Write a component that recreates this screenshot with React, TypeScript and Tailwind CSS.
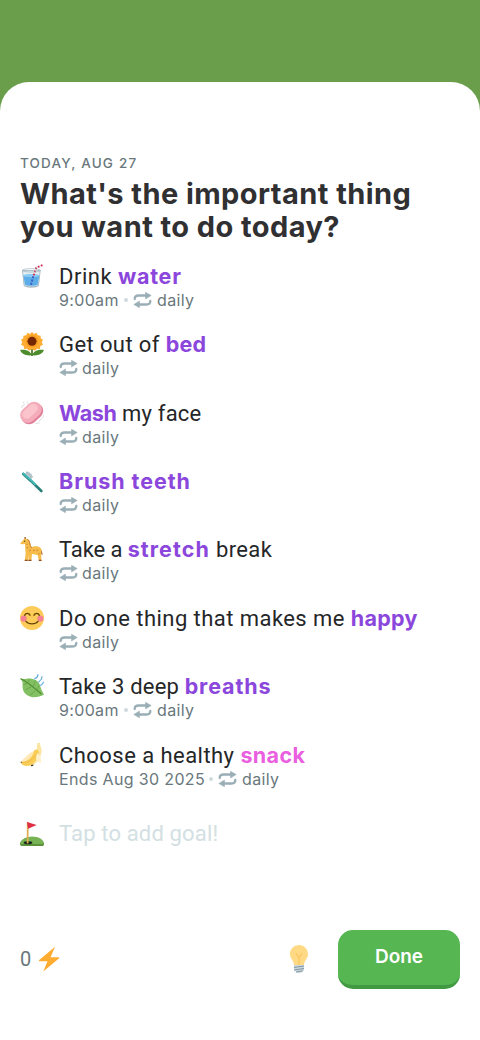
import type {ReactNode} from 'react'

type Segment = {
    text: string
    className: string
}

type Goal = {
    icon: ReactNode
    title: Segment[]
    time?: Segment
}

const PURPLE = 'font-[Inter,sans-serif] text-[21.5px] font-bold text-[#8b46dc]'

function Cup() {
    return (
        <svg viewBox="0 0 36 36" className="size-full">
            <path d="M3 9h28l-2.500 23c-.4 2-5 3.500-11.500 3.500S6 34 5.500 32z" fill="#a3b5be"/>
            <path d="M4.300 10h25.400l-2.400 21c-.5 1.600-4.300 2.500-10.300 2.500s-9.800-.9-10.300-2.500z" fill="#e1edf2"/>
            <path d="M5 17c5-1.500 19-1.500 24 0l-2.200 13.500c-.5 1.500-4.300 2.300-9.800 2.300s-9.300-.8-9.800-2.300z" fill="#5dade8"/>
            <ellipse cx="17" cy="17.500" rx="12" ry="2.500" fill="#88caf4"/>
            <path d="M16.500 31L20 18" stroke="#3f5fc4" strokeWidth="3" strokeDasharray="3 2"/>
            <path d="M20.500 17L24.500 5.500 34 1.500" fill="none" stroke="#f3e9ef" strokeWidth="2.800"/>
            <path d="M20.500 17L24.500 5.500 34 1.500" fill="none" stroke="#cf244c" strokeWidth="2.800" strokeDasharray="2.500 2.400"/>
            <ellipse cx="17" cy="9.500" rx="13.500" ry="2.500" fill="none" stroke="#9cb0b9"/>
        </svg>
    )
}

function Sunflower() {
    return (
        <svg viewBox="0 0 36 36" className="size-full">
            <path d="M18 22v14" stroke="#3e721d" strokeWidth="2.500"/>
            <path d="M18 35C15 27 7 26 0 27c2 5 7 9 18 8zM18 35c3-8 11-9 18-8-2 5-7 9-18 8z" fill="#4c8b2b"/>
            <path
                d="M18 0l3 3 4-2 1.500 4 4.500.5v4l3.500 2-2 4 2 3.500-4 2-.5 4.500-4.500-.5-3 3-4.500-2-4.500 2-3-3-4.500.5-.5-4.500-4-2 2-3.500-2-4 3.500-2v-4l4.500-.5L11 1l4 2z"
                fill="#ffac33"/>
            <circle cx="18" cy="14" r="9" fill="#f4900c" opacity=".6"/>
            <circle cx="18" cy="14" r="6.800" fill="#732700"/>
        </svg>
    )
}

function Soap() {
    return (
        <svg viewBox="0 0 36 36" className="size-full">
            <g fill="none" stroke="#d7dcde" strokeWidth="1.500" strokeLinecap="round">
                <path d="M6 1c-4 2 3 3 0 5s-4 1-3 4M11 0c-3 2 3 3 1 5M29 30c3-1 0-3 3-3M33 25c3-1 1-3 3-4M24 34c3 0 2-2 5-1"/>
            </g>
            <g transform="rotate(-43 17.500 18)">
                <rect x="-.5" y="8" width="36" height="23" rx="11.500" fill="#e07f97"/>
                <rect x="-.5" y="5" width="36" height="23" rx="11.500" fill="#f4abba"/>
                <rect x="4" y="8" width="27" height="13" rx="6.500" fill="#fbc4cd"/>
            </g>
        </svg>
    )
}

function Toothbrush() {
    return (
        <svg viewBox="0 0 36 36" className="size-full">
            <path d="M8 7l2-4 2 2 2-1 1 3 3 0-1 3 3 1-3 4z" fill="#b9c8ce"/>
            <path d="M10 7l1.500-3M13 9l2-2.500M15 12l2.500-2.500" stroke="#8ca2ab"/>
            <path d="M5 7.500l11 10L32 33" fill="none" stroke="#277f79" strokeWidth="4" strokeLinecap="round"/>
            <path d="M5 6.800l11.500 10 6 6" fill="none" stroke="#44b9b5" strokeWidth="3" strokeLinecap="round"/>
        </svg>
    )
}

function Giraffe() {
    return (
        <svg viewBox="0 0 36 36" className="size-full">
            <path d="M30 19c3 1 1.500 5 3.500 7.500" fill="none" stroke="#b86b35" strokeWidth="1.800"/>
            <path
                d="M6 3l1.500-3 1.500 2.500C13 3 15 5 15 9l2 6c5-1.500 11-1.500 14 1.500 1.800 2 1.200 5 .5 8l.8 11.500h-4l-1.800-9-8.500-1.500L17 36h-4.500l.5-10-1.500 10H7L8.500 24c-.8-3-.5-9-1-13.500L3 11C0 11 0 8 2.500 7z"
                fill="#f6bd4b"/>
            <path d="M11 3.500c3 1 3.500 5 4.300 9l2 4" fill="none" stroke="#c27035" strokeWidth="1.400"/>
            <g fill="#d58a3f">
                <circle cx="10.500" cy="11" r="1.100"/>
                <circle cx="11" cy="16" r="1.200"/>
                <circle cx="15" cy="20" r="1.300"/>
                <circle cx="21" cy="20" r="1.300"/>
                <circle cx="26" cy="20" r="1.300"/>
                <circle cx="28.500" cy="25" r="1.100"/>
            </g>
            <path d="M7.300 34h4.400l-.3 2H7zM12.700 34h4.700L17 36h-4.500zM28 34h4.200l.1 2h-3.900zM6.800 0h1.800v2.500H6.800z" fill="#8c4f2b"/>
            <circle cx="7" cy="6.300" r=".9" fill="#292f33"/>
        </svg>
    )
}

function Smile() {
    return (
        <svg viewBox="0 0 36 36" className="size-full">
            <circle cx="18" cy="18" r="18" fill="#fdcb58"/>
            <circle cx="5.500" cy="19" r="4.600" fill="#f58294"/>
            <circle cx="30.500" cy="19" r="4.600" fill="#f58294"/>
            <g fill="none" stroke="#664500" strokeWidth="2" strokeLinecap="round">
                <path d="M7 14c1.500-4 6.500-4 8 0M21 14c1.500-4 6.500-4 8 0M9 23c4 5 14 5 18 0"/>
            </g>
        </svg>
    )
}

function Leaf() {
    return (
        <svg viewBox="0 0 36 36" className="size-full">
            <path d="M0 6c4 2 5 2 10 1 10-1 18 3 20 10 1 5 3 8 6 14-7 3-13 5-20 3C5 31 3 23 4 14 4 11 2 9 0 6z" fill="#83bf63"/>
            <path d="M1 7c10 4 23 16 31 23" fill="none" stroke="#4c8b33" strokeWidth="1.600"/>
            <path d="M12 13l2-5M20 19l3-9M25 24l4-7M11 14L5 16M17 19L8 24M23 25l-8 7" fill="none" stroke="#63a344"
                  strokeWidth="1.200"/>
            <path d="M27 1c0 4-3 5-5 6M33 4c0 5-3 6-5 8M35 12c0 3-2 4-4 5" fill="none" stroke="#5ba9df" strokeWidth="1.700"
                  strokeLinecap="round"/>
        </svg>
    )
}

function Banana() {
    return (
        <svg viewBox="0 0 36 36" className="size-full">
            <path d="M23 14c3-3 2-9 3-14h4c0 6 4 9 2 15-2 10-8 17-17 20l-3-2z" fill="#fbe5a1"/>
            <path d="M21 12c3-4 8-2 7 4-2 10-9 17-16 18-5 1-9 0-11-5 5 0 12-9 20-17z" fill="#f9cd55"/>
            <path d="M21 12c-7 2-13 10-20 16 8 2 18-6 20-16z" fill="#ffe8b6"/>
            <path d="M25 15c6 2 7 11 7 15-3-1-6-2-8-6z" fill="#fff0c9"/>
            <path d="M3 29c10 1 17-5 22-13" fill="none" stroke="#f2b94a" strokeWidth="1.500"/>
            <circle cx="2" cy="29" r="1.200" fill="#8a7443"/>
            <path d="M16.500 34l3.500-.7" stroke="#3e3b2c" strokeWidth="2"/>
        </svg>
    )
}

function GolfFlag() {
    return (
        <svg viewBox="0 0 36 36" className="size-full">
            <path d="M36 33c0 2.500-1 3-3 3H3c-2 0-3-1-3-3 0-6 9-11 18-11s18 5 18 11z" fill="#5c913b"/>
            <path d="M1 31c3-11 31-12 34-1 1 4-2 3-5 3H5c-2 0-4 0-4-2z" fill="#77b255"/>
            <ellipse cx="12" cy="31" rx="6.500" ry="2.200" fill="#18251b"/>
            <path d="M11.500 1v30" stroke="#ddae55" strokeWidth="2.600" strokeLinecap="round"/>
            <path d="M10.500 0L25 4.500 12 10z" fill="#dd2e44"/>
        </svg>
    )
}

function Bolt() {
    return (
        <svg viewBox="0 0 22 26" className="h-[26px] w-[22px]">
            <path d="M17 .8L1.200 14c-.7.6-.3 1.200.5 1.200h7.800L5.300 25.500 20.900 12.500c.7-.6.300-1.200-.5-1.200h-7.800z" fill="#ffac33"/>
        </svg>
    )
}

function Bulb() {
    return (
        <svg viewBox="0 0 18 28" className="h-[28px] w-[18px]">
            <path d="M9 0C4 0 0 4 0 9c0 4.500 3.500 6 4 11h10c.5-5 4-6.500 4-11 0-5-4-9-9-9z" fill="#ffd983"/>
            <path d="M6 8.500L9 12.500l3-4M9 12.500V20" fill="none" stroke="#f9c562" strokeWidth="1.200" strokeLinecap="round"/>
            <path d="M4 20h10v5l-2.500 2.500c-1 .6-4 .6-5 0L4 25z" fill="#ccd6dd"/>
            <path d="M4 22.500l10-1.500M4 25l10-1.500M6 27l7-1.200" stroke="#8299a5" strokeWidth="1"/>
        </svg>
    )
}

function Repeat() {
    return (
        <svg viewBox="0 0 19 16" className="h-4 w-[19px] shrink-0">
            <g fill="none" stroke="#9aaeb6" strokeWidth="2.300" strokeLinecap="round">
                <path d="M1.700 7C1.700 4.500 3 3.500 5.500 3.500H13M17.300 9c0 2.500-1.300 3.500-3.800 3.500H6"/>
            </g>
            <path d="M12.500.2l5.700 3.300-5.700 3.500zM6.500 9L.8 12.500l5.700 3.300z" fill="#9aaeb6" stroke="#9aaeb6" strokeWidth=".5"
                  strokeLinejoin="round"/>
        </svg>
    )
}

const goals: Goal[] = [
    {
        icon: <Cup/>,
        title: [
            {text: 'Drink ', className: 'tracking-[0.5px]'},
            {text: 'water', className: `${PURPLE} tracking-[0.75px]`},
        ],
        time: {text: '9:00am', className: 'w-[61px]'},
    },
    {
        icon: <Sunflower/>,
        title: [
            {text: 'Get out of ', className: 'tracking-[0.4px]'},
            {text: 'bed', className: `${PURPLE} tracking-[0.2px]`},
        ],
    },
    {
        icon: <Soap/>,
        title: [
            {text: 'Wash', className: `${PURPLE} tracking-[-0.4px]`},
            {text: ' my face', className: 'tracking-[0.2px]'},
        ],
    },
    {
        icon: <Toothbrush/>,
        title: [{text: 'Brush teeth', className: `${PURPLE} tracking-[0.95px]`}],
    },
    {
        icon: <Giraffe/>,
        title: [
            {text: 'Take a ', className: 'tracking-[-0.1px]'},
            {text: 'stretch', className: `${PURPLE} tracking-[1.1px]`},
            {text: ' break', className: 'tracking-[0.4px]'},
        ],
    },
    {
        icon: <Smile/>,
        title: [
            {text: 'Do one thing that makes me ', className: 'tracking-[0.44px]'},
            {text: 'happy', className: `${PURPLE} tracking-[0.3px]`},
        ],
    },
    {
        icon: <Leaf/>,
        title: [
            {text: 'Take 3 deep ', className: 'tracking-[0.2px]'},
            {text: 'breaths', className: `${PURPLE} tracking-[0.85px]`},
        ],
        time: {text: '9:00am', className: 'w-[61px]'},
    },
    {
        icon: <Banana/>,
        title: [
            {text: 'Choose a healthy ', className: 'tracking-[0.45px]'},
            {text: 'snack', className: 'font-[Inter,sans-serif] text-[21.5px] font-bold tracking-[0.4px] text-[#ea5fe0]'},
        ],
        time: {text: 'Ends Aug 30 2025', className: 'w-[146px]'},
    },
]

function GoalRow({goal}: { goal: Goal }) {
    return (
        <li className="flex h-[68.35px] gap-[15px]">
            <div className="mt-[2px] size-6 shrink-0">{goal.icon}</div>
            <div>
                <div className="flex h-7 items-baseline whitespace-pre text-[22px] leading-7 text-[#252628]">
                    {goal.title.map((part) => (
                        <span key={part.text} className={part.className}>{part.text}</span>
                    ))}
                </div>
                <div className="flex h-5 items-center whitespace-nowrap font-[Inter,sans-serif] text-[16px] leading-5 tracking-[0.35px] text-[#69777c]">
                    {goal.time && (
                        <>
                            <span className={goal.time.className}>{goal.time.text}</span>
                            <span className="mr-[5px] ml-1 size-1 shrink-0 rounded-full bg-[#d0dbde]"/>
                        </>
                    )}
                    <Repeat/>
                    <span className={goal.time ? 'ml-[5px]' : 'ml-1'}>daily</span>
                </div>
            </div>
        </li>
    )
}

export default function App() {
    return (
        <div className="h-[1040px] w-[480px] overflow-hidden bg-[#6a9e4b] pt-[82px] font-[Roboto,sans-serif]">
            <main className="flex h-[958px] flex-col rounded-t-[29px] bg-white pt-[72px] pr-5 pl-5">
                <p className="font-[Inter,sans-serif] text-[13.5px] leading-[18px] font-medium tracking-[1.18px] text-[#69777c]">TODAY, AUG 27</p>
                <h1 className="mt-[5px] font-[Inter,sans-serif] text-[29px] leading-[33px] font-bold tracking-[0.43px] whitespace-nowrap text-[#303032]">
                    What's the important thing<br/>
                    you want to do today?
                </h1>
                <ul className="mt-[19.100px]">
                    {goals.map((goal, i) => <GoalRow key={i} goal={goal}/>)}
                </ul>
                <div className="mt-[11.200px] flex h-7 items-center gap-[15px]">
                    <div className="size-6"><GolfFlag/></div>
                    <span className="text-[22px] leading-7 tracking-[0.15px] text-[#d3e0e3]">Tap to add goal!</span>
                </div>
                <footer className="mt-[81.700px] flex h-[59px] items-center">
                    <span className="w-[18px] text-[20px] text-[#69777c]">0</span>
                    <Bolt/>
                    <div className="mr-[30px] ml-auto"><Bulb/></div>
                    <button
                        className="h-[59px] w-[122px] rounded-[15px] border-b-4 border-[#419a41] bg-[#55b652] pt-px font-[Inter,sans-serif] text-[19px] font-semibold text-white">
                        Done
                    </button>
                </footer>
            </main>
        </div>
    )
}
